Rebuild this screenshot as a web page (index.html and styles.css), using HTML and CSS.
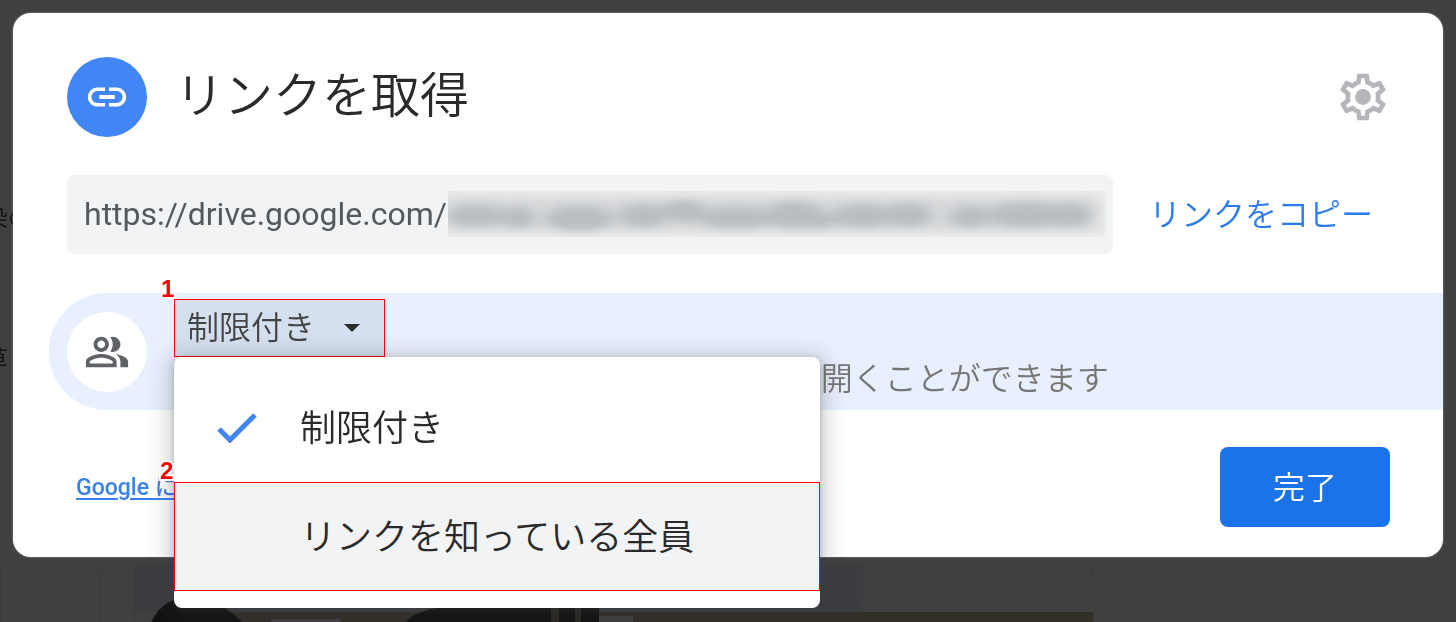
FILE: index.html
```html
<!DOCTYPE html>
<html lang="ja">
<head>
    <meta charset="UTF-8">
    <meta name="viewport" content="width=device-width, initial-scale=1.0">
    <title>リンクを取得</title>
    <link rel="stylesheet" href="styles.css">
</head>
<body>

<!-- Dimmed file list behind the dialog -->
<div class="backdrop" aria-hidden="true">
    <div class="file-names">
        <span>染の</span>
        <span>草</span>
    </div>
    <div class="cards">
        <div class="card card-small"></div>
        <div class="card card-photo">
            <svg width="960" height="57" viewBox="0 0 960 57">
                <path d="M0 0h728v24q0 14-2 22H0z" fill="#3c3d40"/>
                <path d="M40 46h920v11H40z" fill="#322e28"/>
                <path d="M16 57C24 38 42 28 62 31c20 4 34 14 46 26z" fill="#111"/>
                <path d="M270 57c10-12 30-17 60-17h134v17z" fill="#111"/>
                <path d="M136 53h70v4h-70z" fill="#403e40"/>
                <path d="M464 50h34v7h-34z" fill="#403e40"/>
                <path d="M416 40h8v17h-8zM440 40h6v17h-6z" fill="#2a2723"/>
            </svg>
        </div>
    </div>
</div>

<main class="dialog">
    <header class="header">
        <span class="badge">
            <svg width="46" height="46" viewBox="0 0 24 24" fill="#fff">
                <path d="M3.9 12c0-1.71 1.39-3.1 3.1-3.1h4V7H7c-2.76 0-5 2.24-5 5s2.24 5 5 5h4v-1.9H7c-1.71 0-3.1-1.39-3.1-3.1zM8 13h8v-2H8v2zm9-6h-4v1.9h4c1.71 0 3.1 1.39 3.1 3.1s-1.39 3.1-3.1 3.1h-4V17h4c2.76 0 5-2.24 5-5s-2.24-5-5-5z"/>
            </svg>
        </span>
        <h1 class="title">リンクを取得</h1>
        <button class="settings" aria-label="設定">
            <svg width="56" height="56" viewBox="0 0 24 24" fill="#b4b6ba">
                <path d="M19.43 12.98c.04-.32.07-.64.07-.98 0-.34-.03-.66-.07-.98l2.11-1.65c.19-.15.24-.42.12-.64l-2-3.46c-.09-.16-.26-.25-.44-.25-.06 0-.12.01-.17.03l-2.49 1c-.52-.4-1.08-.73-1.69-.98l-.38-2.65C14.46 2.18 14.25 2 14 2h-4c-.25 0-.46.18-.49.42l-.38 2.65c-.61.25-1.17.59-1.69.98l-2.49-1c-.06-.02-.12-.03-.18-.03-.17 0-.34.09-.43.25l-2 3.46c-.13.22-.07.49.12.64l2.11 1.65c-.04.32-.07.65-.07.98 0 .33.03.66.07.98l-2.11 1.65c-.19.15-.24.42-.12.64l2 3.46c.09.16.26.25.44.25.06 0 .12-.01.17-.03l2.49-1c.52.4 1.08.73 1.69.98l.38 2.65c.03.24.24.42.49.42h4c.25 0 .46-.18.49-.42l.38-2.65c.61-.25 1.17-.59 1.69-.98l2.49 1c.06.02.12.03.18.03.17 0 .34-.09.43-.25l2-3.46c.12-.22.07-.49-.12-.64l-2.11-1.65zm-1.98-1.71c.04.31.05.52.05.73 0 .21-.02.43-.05.73l-.14 1.13.89.7 1.08.84-.7 1.21-1.27-.51-1.04-.42-.9.68c-.43.32-.84.56-1.25.73l-1.06.43-.16 1.13-.2 1.35h-1.4l-.19-1.35-.16-1.13-1.06-.43c-.43-.18-.83-.41-1.23-.71l-.91-.7-1.06.43-1.27.51-.7-1.21 1.08-.84.89-.7-.14-1.13c-.03-.31-.05-.54-.05-.74s.02-.43.05-.73l.14-1.13-.89-.7-1.08-.84.7-1.21 1.27.51 1.04.42.9-.68c.43-.32.84-.56 1.25-.73l1.06-.43.16-1.13.2-1.35h1.39l.19 1.35.16 1.13 1.06.43c.43.18.83.41 1.23.71l.91.7 1.06-.43 1.27-.51.7 1.21-1.07.85-.89.7.14 1.13z"/>
                <circle cx="12" cy="12" r="3.4"/>
            </svg>
        </button>
    </header>

    <div class="link-row">
        <div class="link-box">
            <input class="link-input" type="text" value="https://drive.google.com/" aria-label="リンク" readonly>
            <svg class="link-mask" viewBox="0 0 654 46" preserveAspectRatio="none" aria-hidden="true">
                <defs>
                    <filter id="soft" x="-10%" y="-60%" width="120%" height="220%">
                        <feGaussianBlur stdDeviation="7 5"/>
                    </filter>
                </defs>
                <rect width="650" height="46" fill="#ebecec"/>
                <g filter="url(#soft)" fill="#b9bdc0">
                    <rect x="-6" y="6" width="650" height="34" fill="#d5d7d9"/>
                    <ellipse cx="28" cy="25" rx="30" ry="11"/>
                    <ellipse cx="70" cy="27" rx="16" ry="11"/>
                    <ellipse cx="130" cy="28" rx="34" ry="13"/>
                    <ellipse cx="193" cy="25" rx="24" ry="12"/>
                    <ellipse cx="233" cy="20" rx="22" ry="11"/>
                    <ellipse cx="285" cy="27" rx="38" ry="11"/>
                    <ellipse cx="342" cy="24" rx="28" ry="14"/>
                    <ellipse cx="366" cy="29" rx="16" ry="10"/>
                    <ellipse cx="410" cy="25" rx="30" ry="12"/>
                    <ellipse cx="455" cy="24" rx="24" ry="12"/>
                    <ellipse cx="516" cy="26" rx="20" ry="11"/>
                    <ellipse cx="572" cy="24" rx="38" ry="13"/>
                    <ellipse cx="614" cy="24" rx="24" ry="12"/>
                </g>
            </svg>
        </div>
        <button class="copy">リンクをコピー</button>
    </div>

    <section class="access">
        <span class="people">
            <svg width="46" height="46" viewBox="0 0 24 24" fill="#5f6368">
                <path d="M16.67 13.13C18.04 14.06 19 15.32 19 17v3h4v-3c0-2.18-3.57-3.47-6.33-3.87zM15 12c2.21 0 4-1.79 4-4s-1.79-4-4-4c-.47 0-.91.1-1.33.24C14.5 5.27 15 6.58 15 8s-.5 2.73-1.33 3.76c.42.14.86.24 1.33.24zM9 12c2.21 0 4-1.79 4-4s-1.79-4-4-4-4 1.79-4 4 1.79 4 4 4zm0-6c1.1 0 2 .9 2 2s-.9 2-2 2-2-.9-2-2 .9-2 2-2zM9 13c-2.67 0-8 1.34-8 4v3h16v-3c0-2.66-5.33-4-8-4zm6 5H3v-.99C3.2 16.29 6.3 15 9 15s5.8 1.29 6 2v1z"/>
            </svg>
        </span>
        <div class="access-body">
            <div class="dropdown">
                <span class="mark mark-one">1</span>
                <select class="access-select" aria-label="アクセス権">
                    <option selected>制限付き</option>
                    <option>リンクを知っている全員</option>
                </select>
                <svg class="arrow" width="16" height="8" viewBox="0 0 16 8" aria-hidden="true">
                    <path d="M0 0h16L8 8z" fill="#2c2c2c"/>
                </svg>
                <div class="menu">
                    <button class="menu-item">
                        <svg class="check" width="40" height="30" viewBox="0 0 40 30" aria-hidden="true">
                            <path d="M2 16l11 11L38 2" fill="none" stroke="#4285f4" stroke-width="5"/>
                        </svg>
                        <span class="menu-label">制限付き</span>
                    </button>
                    <button class="menu-item active">
                        <span class="mark mark-two">2</span>
                        <span class="check"></span>
                        <span class="menu-label">リンクを知っている全員</span>
                    </button>
                </div>
            </div>
            <p class="hint">追加されたユーザーのみが、このリンクから開くことができます</p>
        </div>
    </section>

    <footer class="footer">
        <a class="feedback" href="#">Google にフィードバックを送信</a>
        <button class="done">完了</button>
    </footer>
</main>

</body>
</html>
```

FILE: styles.css
```css
* {
    box-sizing: border-box;
}
body {
    margin: 0;
    min-height: 100vh;
    padding: 13px;
    background-color: #404040;
    color: #2a2a2a;
    font-family: Roboto, "Noto Sans CJK JP", sans-serif;
    font-weight: 350;
    overflow: hidden;
}
button,
select,
input {
    border: none;
    background: none;
    padding: 0;
    color: inherit;
    font: inherit;
}
button {
    cursor: pointer;
}
svg {
    display: block;
}

/* Page behind */
.backdrop {
    position: fixed;
    inset: 0;
    display: flex;
    flex-direction: column;
    justify-content: flex-end;
    overflow: hidden;
}
.file-names {
    flex: 1;
    display: flex;
    flex-direction: column;
    gap: 106px;
    padding-top: 200px;
    margin-left: -16px;
    color: #111;
    font-size: 24px;
    line-height: 36px;
}
.cards {
    display: flex;
    gap: 33px;
}
.card {
    height: 57px;
    border: 1px solid #3a3b3d;
    border-bottom: none;
    border-top-right-radius: 10px;
    overflow: hidden;
}
.card-small {
    width: 101px;
}
.card-photo {
    width: 960px;
}

/* Dialog */
.dialog {
    position: relative;
    padding: 44px 0 30px;
    background-color: #fff;
    border-radius: 18px;
    box-shadow: 0 0 2px rgba(255, 255, 255, 0.5);
}
.header {
    display: flex;
    align-items: center;
    padding: 0 52px 0 54px;
}
.badge,
.people {
    display: flex;
    align-items: center;
    justify-content: center;
    flex: none;
    width: 80px;
    height: 80px;
    border-radius: 50%;
}
.badge {
    background-color: #4285f4;
}
.title {
    flex: 1;
    margin: 0 0 0 28px;
    font-size: 49px;
    font-weight: 350;
    line-height: 80px;
}

.link-row {
    display: flex;
    align-items: center;
    gap: 36px;
    margin-top: 38px;
    padding: 0 70px 0 54px;
}
.link-box {
    flex: 1;
    display: flex;
    align-items: center;
    height: 79px;
    padding: 0 4px 2px 17px;
    border-radius: 8px;
    background-color: #f1f3f4;
}
.link-input {
    width: 364px;
    color: #55585c;
    font-size: 32px;
    font-weight: 400;
}
.link-mask {
    flex: 1;
    min-width: 0;
    height: 46px;
}
.copy {
    flex: none;
    padding-bottom: 6px;
    color: #2a7bf0;
    font-size: 32px;
    white-space: nowrap;
}

/* General access */
.access {
    display: flex;
    align-items: center;
    height: 117px;
    margin: 39px 0 0 36px;
    padding-left: 18px;
    border-radius: 58px 0 0 58px;
    background-color: #e8f0fe;
}
.people {
    background-color: #fff;
}
.access-body {
    flex: 1;
    align-self: flex-start;
    padding: 6px 0 0 27px;
}
.dropdown {
    position: relative;
    width: 211px;
}
.access-select {
    display: block;
    width: 100%;
    height: 58px;
    padding-left: 12px;
    appearance: none;
    border: 1px solid #f00;
    background-color: #d5e0ee;
    color: #444;
    font-size: 32px;
}
.arrow {
    position: absolute;
    top: 25px;
    right: 25px;
}
.hint {
    margin: 0;
    padding-left: 8px;
    color: #777;
    font-size: 32px;
    line-height: 44px;
    white-space: nowrap;
}
.menu {
    position: absolute;
    top: 58px;
    left: 0;
    width: 646px;
    padding: 16px 0 17px;
    border-radius: 8px;
    background-color: #fff;
    box-shadow: 0 2px 6px rgba(60, 64, 67, 0.3), 0 4px 20px 8px rgba(60, 64, 67, 0.2);
}
.menu-item {
    position: relative;
    display: flex;
    align-items: center;
    gap: 43px;
    width: 100%;
    height: 109px;
    padding: 0 42px;
    border: 1px solid transparent;
    font-size: 36px;
}
.menu-item.active {
    border: 1px solid #f00;
    background-color: #f1f3f4;
}
.menu-label {
    padding-bottom: 6px;
}
.check {
    width: 40px;
}
.mark {
    position: absolute;
    color: #f00;
    font: bold 24px/24px "Liberation Sans", Arial, sans-serif;
    -webkit-text-stroke: 4px #fff;
    paint-order: stroke fill;
}
.mark-one {
    top: -22px;
    left: -13px;
}
.mark-two {
    top: -24px;
    left: -15px;
}

.footer {
    display: flex;
    align-items: center;
    justify-content: space-between;
    padding: 37px 53px 0 63px;
}
.feedback {
    padding-bottom: 4px;
    color: #3b80f0;
    font-size: 23px;
    font-weight: 500;
    text-underline-offset: 3px;
}
.done {
    width: 170px;
    height: 80px;
    padding-bottom: 4px;
    border-radius: 8px;
    background-color: #1a73e8;
    color: #fff;
    font-size: 32px;
}
```
